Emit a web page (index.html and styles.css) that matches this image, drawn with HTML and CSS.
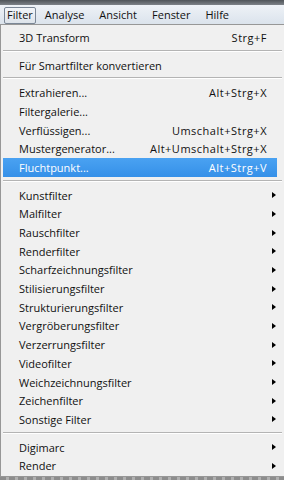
FILE: index.html
```html
<!DOCTYPE html>
<html lang="de">
  <head>
    <meta charset="UTF-8" />
    <title>Filter-Menü</title>
    <link rel="stylesheet" href="styles.css">
  </head>
  <body>
    <div class="titlebar"></div>
    <div class="menubar">
      <span class="top open">Filter</span>
      <span class="top">Analyse</span>
      <span class="top">Ansicht</span>
      <span class="top">Fenster</span>
      <span class="top">Hilfe</span>
    </div>

    <div class="menu">
      <div class="item"><span>3D Transform</span><span class="key">Strg+F</span></div>
      <div class="sep"></div>
      <div class="item"><span>Für Smartfilter konvertieren</span></div>
      <div class="sep"></div>
      <div class="item"><span>Extrahieren...</span><span class="key">Alt+Strg+X</span></div>
      <div class="item"><span>Filtergalerie...</span></div>
      <div class="item"><span>Verflüssigen...</span><span class="key">Umschalt+Strg+X</span></div>
      <div class="item"><span>Mustergenerator...</span><span class="key">Alt+Umschalt+Strg+X</span></div>
      <div class="item active"><span>Fluchtpunkt...</span><span class="key">Alt+Strg+V</span></div>
      <div class="sep"></div>
      <div class="item"><span>Kunstfilter</span><i class="arrow"></i></div>
      <div class="item"><span>Malfilter</span><i class="arrow"></i></div>
      <div class="item"><span>Rauschfilter</span><i class="arrow"></i></div>
      <div class="item"><span>Renderfilter</span><i class="arrow"></i></div>
      <div class="item"><span>Scharfzeichnungsfilter</span><i class="arrow"></i></div>
      <div class="item"><span>Stilisierungsfilter</span><i class="arrow"></i></div>
      <div class="item"><span>Strukturierungsfilter</span><i class="arrow"></i></div>
      <div class="item"><span>Vergröberungsfilter</span><i class="arrow"></i></div>
      <div class="item"><span>Verzerrungsfilter</span><i class="arrow"></i></div>
      <div class="item"><span>Videofilter</span><i class="arrow"></i></div>
      <div class="item"><span>Weichzeichnungsfilter</span><i class="arrow"></i></div>
      <div class="item"><span>Zeichenfilter</span><i class="arrow"></i></div>
      <div class="item"><span>Sonstige Filter</span><i class="arrow"></i></div>
      <div class="sep"></div>
      <div class="item"><span>Digimarc</span><i class="arrow"></i></div>
      <div class="item"><span>Render</span><i class="arrow"></i></div>
    </div>
    <div class="footer"></div>
  </body>
</html>
```

FILE: styles.css
```css
body {
  margin: 0;
  width: 284px;
  height: 480px;
  overflow: hidden;
  background: #c9c9c9;
  font-family: "Open Sans", "Noto Sans", sans-serif;
  font-size: 11px;
  color: #111;
}
.titlebar {
  height: 5px;
  background: linear-gradient(#4f5459, #7d8288);
}
.menubar {
  height: 19px;
  display: flex;
  align-items: flex-end;
  background: linear-gradient(#eef2f7, #dbe3ec);
  padding-left: 4px;
}
.top {
  height: 15px;
  line-height: 14px;
  padding: 0 2px;
  margin-right: 9px;
  border: 1px solid transparent;
}
.top.open {
  border-color: #7b8796;
  border-radius: 2px;
  background: linear-gradient(#f2f5f9, #dde3ea);
  margin-right: 6px;
}
.menu {
  width: 279px;
  padding: 3px 2px 1px;
  border: 1px solid #979797;
  background: #f0f0f0;
}
.item {
  height: 18.7px;
  display: flex;
  align-items: center;
  padding: 0 6px 0 16px;
  white-space: nowrap;
}
.item .key {
  margin-left: auto;
  margin-right: 9px;
  letter-spacing: 0.5px;
}
.item.active {
  margin-right: 5px;
  padding-right: 1px;
  background: linear-gradient(#4aa2f2, #3590e8);
  color: #fff;
}
.arrow {
  margin-left: auto;
  width: 0;
  height: 0;
  border-top: 3.5px solid transparent;
  border-bottom: 3.5px solid transparent;
  border-left: 4px solid #000;
}
.sep {
  height: 9px;
  box-sizing: border-box;
  padding-top: 3px;
}
.sep::before {
  content: "";
  display: block;
  height: 1px;
  background: #b4b4b4;
  border-bottom: 1px solid #fff;
}
.footer {
  height: 3px;
  background: repeating-linear-gradient(90deg, #8d8d8d 0 6px, #b0b0b0 6px 9px);
}
```
